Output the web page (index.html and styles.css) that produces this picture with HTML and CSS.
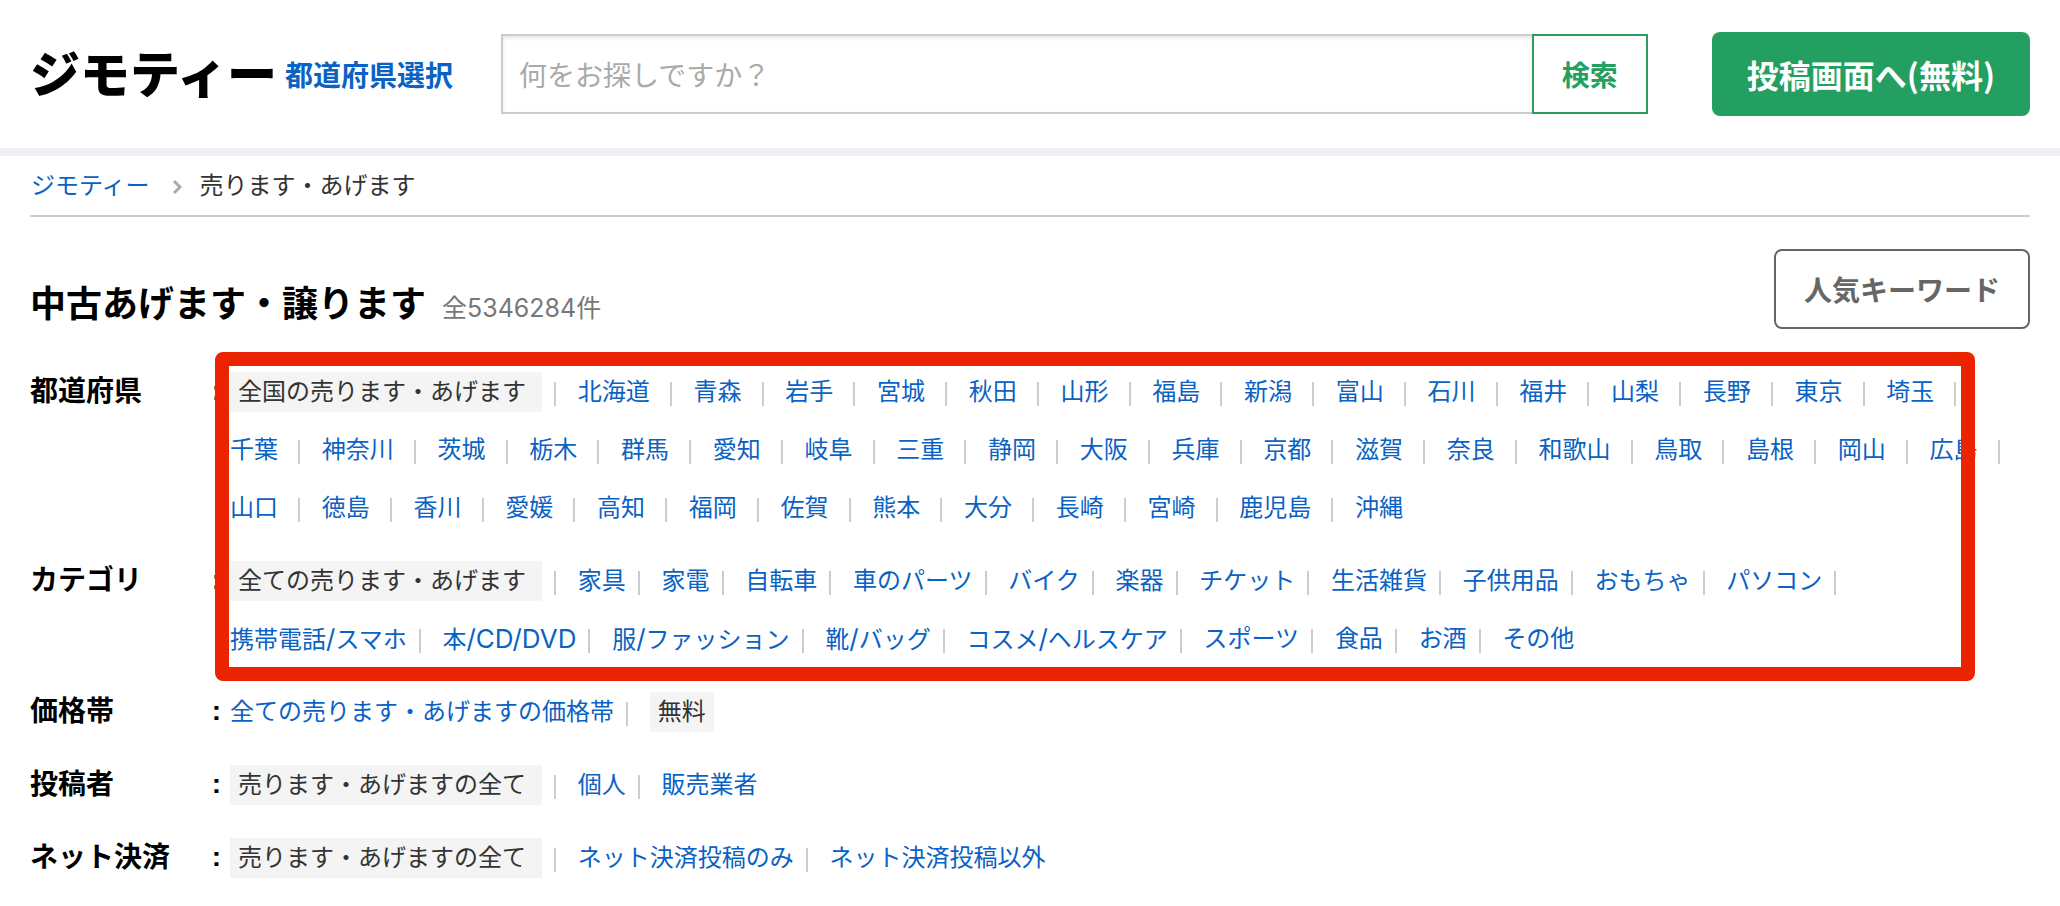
FILE: index.html
```html
<!DOCTYPE html>
<html lang="ja">
<head>
<meta charset="utf-8">
<meta name="viewport" content="width=device-width, initial-scale=1">
<title>中古あげます・譲ります｜ジモティー</title>
<link rel="stylesheet" href="styles.css">
</head>
<body>
<header class="header">
  <a class="logo" href="#">ジモティー</a>
  <a class="area-link" href="#">都道府県選択</a>
  <form class="search">
    <input class="search-input" type="text" placeholder="何をお探しですか？" aria-label="キーワード">
    <button class="search-button" type="button">検索</button>
  </form>
  <button class="post-button" type="button">投稿画面へ(無料)</button>
</header>
<main class="main">
  <nav class="breadcrumb" aria-label="パンくず">
    <a href="#">ジモティー</a>
    <svg class="chevron" width="10" height="16" viewBox="0 0 10 16" aria-hidden="true"><path d="M2 2l6 6-6 6" fill="none" stroke="#aaa" stroke-width="3"/></svg>
    <span>売ります・あげます</span>
  </nav>
  <div class="title-row">
    <h1 class="title">中古あげます・譲ります<small class="count">全5346284件</small></h1>
    <button class="keyword-button" type="button">人気キーワード</button>
  </div>
  <div class="filters">
    <div class="highlight">
      <section class="filter">
        <h2 class="filter-label">都道府県</h2>
        <ul class="options options-wide">
          <li class="current"><span class="chip chip-long">全国の売ります・あげます</span></li>
          <li><a href="#">北海道</a></li>
          <li><a href="#">青森</a></li>
          <li><a href="#">岩手</a></li>
          <li><a href="#">宮城</a></li>
          <li><a href="#">秋田</a></li>
          <li><a href="#">山形</a></li>
          <li><a href="#">福島</a></li>
          <li><a href="#">新潟</a></li>
          <li><a href="#">富山</a></li>
          <li><a href="#">石川</a></li>
          <li><a href="#">福井</a></li>
          <li><a href="#">山梨</a></li>
          <li><a href="#">長野</a></li>
          <li><a href="#">東京</a></li>
          <li><a href="#">埼玉</a></li>
          <li><a href="#">千葉</a></li>
          <li><a href="#">神奈川</a></li>
          <li><a href="#">茨城</a></li>
          <li><a href="#">栃木</a></li>
          <li><a href="#">群馬</a></li>
          <li><a href="#">愛知</a></li>
          <li><a href="#">岐阜</a></li>
          <li><a href="#">三重</a></li>
          <li><a href="#">静岡</a></li>
          <li><a href="#">大阪</a></li>
          <li><a href="#">兵庫</a></li>
          <li><a href="#">京都</a></li>
          <li><a href="#">滋賀</a></li>
          <li><a href="#">奈良</a></li>
          <li><a href="#">和歌山</a></li>
          <li><a href="#">鳥取</a></li>
          <li><a href="#">島根</a></li>
          <li><a href="#">岡山</a></li>
          <li><a href="#">広島</a></li>
          <li><a href="#">山口</a></li>
          <li><a href="#">徳島</a></li>
          <li><a href="#">香川</a></li>
          <li><a href="#">愛媛</a></li>
          <li><a href="#">高知</a></li>
          <li><a href="#">福岡</a></li>
          <li><a href="#">佐賀</a></li>
          <li><a href="#">熊本</a></li>
          <li><a href="#">大分</a></li>
          <li><a href="#">長崎</a></li>
          <li><a href="#">宮崎</a></li>
          <li><a href="#">鹿児島</a></li>
          <li><a href="#">沖縄</a></li>
        </ul>
      </section>
      <section class="filter">
        <h2 class="filter-label">カテゴリ</h2>
        <ul class="options">
          <li><span class="chip chip-long">全ての売ります・あげます</span></li>
          <li><a href="#">家具</a></li>
          <li><a href="#">家電</a></li>
          <li><a href="#">自転車</a></li>
          <li><a href="#">車のパーツ</a></li>
          <li><a href="#">バイク</a></li>
          <li><a href="#">楽器</a></li>
          <li><a href="#">チケット</a></li>
          <li><a href="#">生活雑貨</a></li>
          <li><a href="#">子供用品</a></li>
          <li><a href="#">おもちゃ</a></li>
          <li><a href="#">パソコン</a></li>
          <li><a href="#">携帯電話<span class="latin">/</span>スマホ</a></li>
          <li><a href="#">本<span class="latin">/CD/DVD</span></a></li>
          <li><a href="#">服<span class="latin">/</span>ファッション</a></li>
          <li><a href="#">靴<span class="latin">/</span>バッグ</a></li>
          <li><a href="#">コスメ<span class="latin">/</span>ヘルスケア</a></li>
          <li><a href="#">スポーツ</a></li>
          <li><a href="#">食品</a></li>
          <li><a href="#">お酒</a></li>
          <li><a href="#">その他</a></li>
        </ul>
      </section>
    </div>
    <section class="filter">
      <h2 class="filter-label">価格帯</h2>
      <ul class="options">
        <li><a href="#">全ての売ります・あげますの価格帯</a></li>
        <li><span class="chip">無料</span></li>
      </ul>
    </section>
    <section class="filter">
      <h2 class="filter-label">投稿者</h2>
      <ul class="options">
        <li><span class="chip chip-long">売ります・あげますの全て</span></li>
        <li><a href="#">個人</a></li>
        <li><a href="#">販売業者</a></li>
      </ul>
    </section>
    <section class="filter">
      <h2 class="filter-label">ネット決済</h2>
      <ul class="options">
        <li><span class="chip chip-long">売ります・あげますの全て</span></li>
        <li><a href="#">ネット決済投稿のみ</a></li>
        <li><a href="#">ネット決済投稿以外</a></li>
      </ul>
    </section>
  </div>
</main>
</body>
</html>
```

FILE: styles.css
```css
* {
  box-sizing: border-box;
}

body {
  margin: 0;
  background: #fff;
  color: #333;
  font-family: Inter, "Noto Sans CJK JP", sans-serif;
  font-size: 24px;
}

a {
  color: #0a62c4;
  text-decoration: none;
}

button,
input {
  font-family: "Noto Sans CJK JP", sans-serif;
  margin: 0;
}

.header {
  display: flex;
  align-items: center;
  height: 156px;
  padding: 0 30px;
  border-bottom: 8px solid #efeff4;
}

.logo {
  padding-bottom: 6px;
  color: #000;
  font-family: "Noto Sans CJK JP", sans-serif;
  font-size: 50px;
  font-weight: 900;
  line-height: 80px;
  white-space: nowrap;
}

.area-link {
  margin: 0 48px 0 8px;
  font-size: 28px;
  font-weight: 700;
  white-space: nowrap;
}

.search {
  display: flex;
  flex: 1;
  height: 80px;
  margin-right: 64px;
}

.search-input {
  flex: 1;
  min-width: 0;
  padding: 0 16px;
  border: 2px solid #ccc;
  border-right: 0;
  border-radius: 0;
  background: #fff;
  box-shadow: inset 0 2px 4px rgba(0, 0, 0, 0.1);
  font-size: 28px;
}

.search-input::placeholder {
  color: #aaa;
}

.search-button {
  width: 116px;
  border: 2px solid #2d9b63;
  background: #fff;
  color: #239f62;
  font-size: 28px;
  font-weight: 700;
}

.post-button {
  height: 84px;
  padding: 0 35px;
  border: 0;
  border-radius: 8px;
  background: #239f62;
  color: #fff;
  font-size: 32px;
  font-weight: 700;
}

.main {
  padding: 0 30px 16px;
}

.breadcrumb {
  display: flex;
  align-items: center;
  height: 61px;
  padding: 0 0 5px 1px;
  border-bottom: 2px solid #ccc;
}

.chevron {
  margin: 8px 18px 0 22px;
}

.title-row {
  display: flex;
  justify-content: space-between;
  align-items: flex-end;
  padding: 32px 0 34px;
}

.title {
  margin: 0;
  color: #000;
  font-size: 36px;
  font-weight: 700;
  line-height: 42px;
}

.count {
  margin-left: 16px;
  color: #777;
  font-size: 25px;
  font-weight: 400;
}

.keyword-button {
  height: 80px;
  padding: 0 28px;
  border: 2px solid #666;
  border-radius: 8px;
  background: #fff;
  color: #666;
  font-size: 28px;
  font-weight: 700;
}

.filters,
.highlight {
  display: flex;
  flex-direction: column;
  gap: 15px;
}

.highlight {
  position: relative;
}

/* Red marker frame drawn over the area and category filters */
.highlight::after {
  content: "";
  position: absolute;
  inset: -11px 55px -13px 185px;
  border: 14px solid #ec2300;
  border-radius: 8px;
  pointer-events: none;
}

.filter {
  display: flex;
}

.filter-label {
  display: flex;
  flex: none;
  justify-content: space-between;
  width: 200px;
  margin: 0;
  padding-right: 9px;
  color: #000;
  font-size: 28px;
  font-weight: 700;
  line-height: 56px;
}

.filter-label::after {
  content: ":";
  font-family: "Liberation Sans", sans-serif;
}

.options {
  flex: 1;
  margin: 0;
  padding: 0;
  list-style: none;
  line-height: 58px;
}

.options li {
  display: inline-flex;
  align-items: center;
  height: 58px;
  margin-right: 15px;
  vertical-align: top;
  white-space: nowrap;
}

.options li::after {
  content: "";
  width: 2px;
  height: 24px;
  margin: 4px 0 0 12px;
  background: #ccc;
}

.options li:last-child::after {
  display: none;
}

.options-wide li::after {
  margin-left: 20px;
}

.options-wide .current::after {
  margin-left: 12px;
}

.latin {
  font-size: 26px;
}

.chip {
  padding: 0 8px;
  background: #f4f4f4;
  line-height: 40px;
}

.chip-long {
  padding-right: 16px;
}
```
